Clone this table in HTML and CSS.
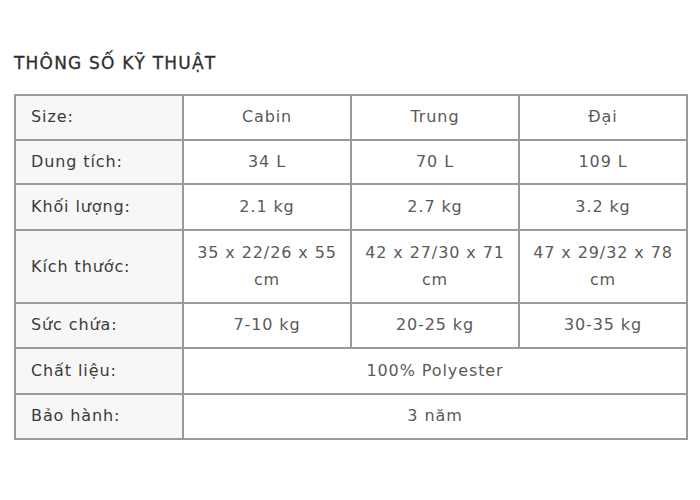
FILE: index.html
```html
<!DOCTYPE html>
<html lang="vi">
<head>
<meta charset="utf-8">
<title>Thông số kỹ thuật</title>
<link rel="stylesheet" href="styles.css">
</head>
<body>
<section class="specs">
  <h2 class="specs-title">THÔNG SỐ KỸ THUẬT</h2>
  <table class="specs-table">
    <tbody>
      <tr><th>Size:</th><td>Cabin</td><td>Trung</td><td>Đại</td></tr>
      <tr><th>Dung tích:</th><td>34 L</td><td>70 L</td><td>109 L</td></tr>
      <tr class="mark"><th>Khối lượng:</th><td>2.1 kg</td><td>2.7 kg</td><td>3.2 kg</td></tr>
      <tr class="tall"><th>Kích thước:</th><td>35 x 22/26 x 55 cm</td><td>42 x 27/30 x 71 cm</td><td>47 x 29/32 x 78 cm</td></tr>
      <tr><th>Sức chứa:</th><td>7-10 kg</td><td>20-25 kg</td><td>30-35 kg</td></tr>
      <tr class="mark"><th>Chất liệu:</th><td colspan="3">100% Polyester</td></tr>
      <tr><th>Bảo hành:</th><td colspan="3">3 năm</td></tr>
    </tbody>
  </table>
</section>
</body>
</html>
```

FILE: styles.css
```css
html, body {
  margin: 0;
  padding: 0;
  background: #ffffff;
}
body {
  font-family: "DejaVu Sans", "Open Sans", sans-serif;
  color: #444444;
}
.specs {
  padding: 53px 12px 0 14px;
}
.specs-title {
  margin: 0 0 21px 0;
  font-size: 17px;
  font-weight: 400;
  line-height: 20px;
  color: #2e2e2e;
  letter-spacing: 1.2px;
  -webkit-text-stroke: 0.3px #2e2e2e;
}
.specs-table {
  width: 100%;
  border-collapse: collapse;
  table-layout: fixed;
  font-size: 16px;
  line-height: 26.7px;
  letter-spacing: 0.9px;
}
.specs-table th,
.specs-table td {
  border: 2px solid #9a9a9a;
  padding: 8px 10px;
  vertical-align: middle;
}
.specs-table th {
  background: #f7f7f7;
  text-align: left;
  font-weight: 400;
  color: #3a3a3a;
  padding-left: 15px;
}
.specs-table td {
  text-align: center;
  color: #5a5a5a;
}
.specs-table .mark td,
.specs-table .mark th {
  padding-top: 8.7px;
  padding-bottom: 8.7px;
}
.specs-table .tall td,
.specs-table .tall th {
  padding-top: 8.8px;
  padding-bottom: 8.8px;
}
```
